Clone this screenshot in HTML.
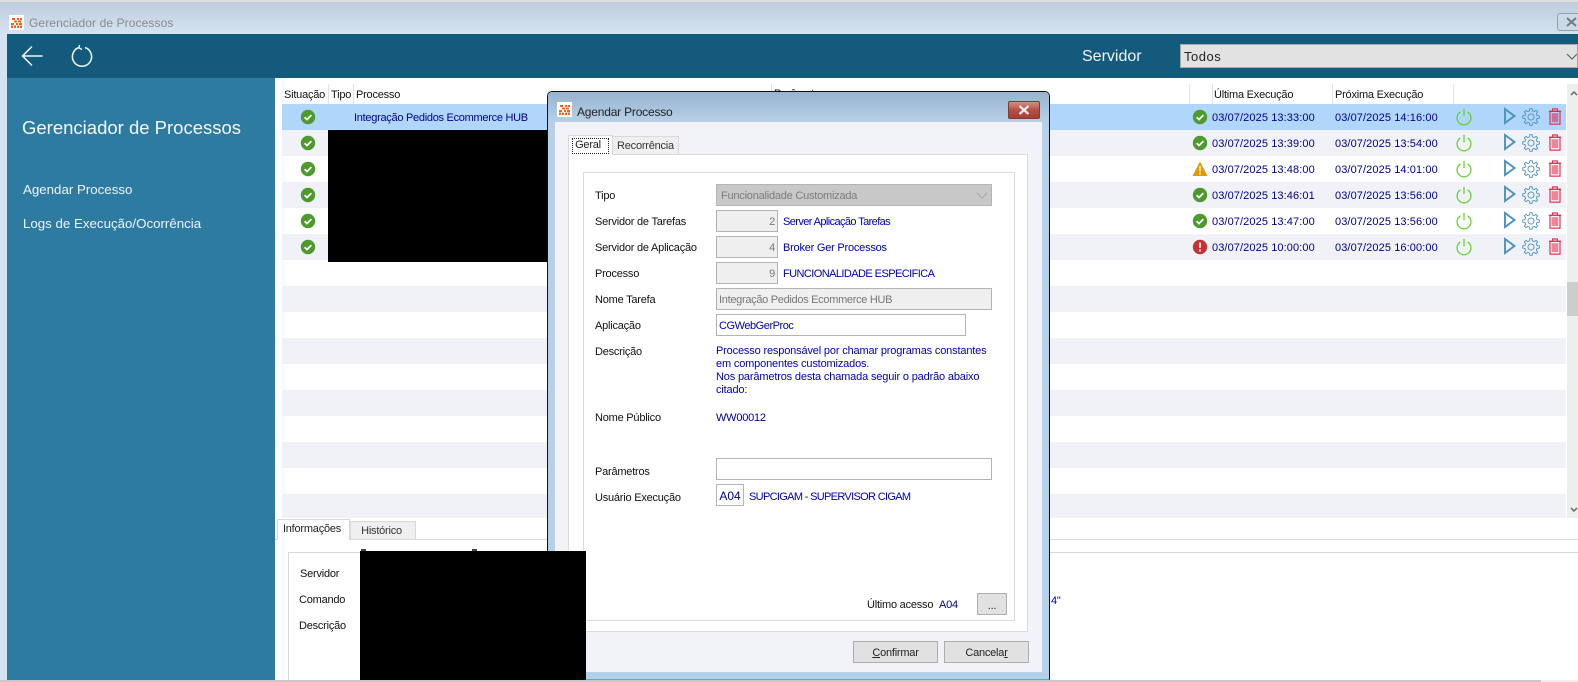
<!DOCTYPE html>
<html lang="pt"><head><meta charset="utf-8"><title>Gerenciador de Processos</title>
<style>
html,body{margin:0;padding:0;background:#fff}
body{width:1578px;height:682px;overflow:hidden;position:relative;font-family:"Liberation Sans",sans-serif;font-size:11px;letter-spacing:-.22px;color:#111}
div,span,svg{position:absolute;box-sizing:border-box}
.t{height:16px;line-height:16px;white-space:nowrap}
.b{color:#0000b4}
.n{color:#00008c}
.st{left:1212px;letter-spacing:.1px}
.nx{left:1335px;letter-spacing:.1px}
.row{left:282px;width:1284px;height:26px}
.g{background:#f0f2f8}
.inp{border:1px solid #b4b4b4;background:#efefef;height:22px;line-height:23px;color:#777;white-space:nowrap}
.lab{left:595px}
.btn{background:#e1e1e1;border:1px solid #adadad;text-align:center;line-height:22px;height:22px;width:85px;top:641px;color:#222}
.tab{background:#efefef;border:1px solid #d9d9d9;text-align:center}
.hl{width:1px;background:#e2e2e2;top:84px;height:20px}
u{text-decoration:underline}
</style></head><body>
<svg width="0" height="0" style="display:none">
<defs>
<symbol id="ok" viewBox="0 0 16 16"><circle cx="8" cy="8" r="7.2" fill="#4f9a2e"/><path d="M4.6 8.2l2.4 2.3 4.4-4.4" fill="none" stroke="#fff" stroke-width="1.7"/></symbol>
<symbol id="pw" viewBox="0 0 20 20"><path d="M6 4.400a7.700 7.700 0 1 0 8 0" fill="none" stroke="#63d02f" stroke-width="1.400"/><path d="M10 1v8" stroke="#63d02f" stroke-width="1.400"/></symbol>
<symbol id="pl" viewBox="0 0 14 18"><path d="M2 2l9.500 7L2 16z" fill="none" stroke="#4b91bd" stroke-width="1.900"/></symbol>
<symbol id="ge" viewBox="-10 -10 20 20"><path d="M-1.570-6.820L-1.290-9.210 1.290-9.210 1.570-6.820 3.710-5.930 5.600-7.420 7.420-5.600 5.930-3.710 6.820-1.570 9.210-1.290 9.210 1.290 6.820 1.570 5.930 3.710 7.420 5.600 5.600 7.420 3.710 5.930 1.570 6.820 1.290 9.210-1.290 9.210-1.570 6.820-3.710 5.930-5.600 7.420-7.420 5.600-5.930 3.710-6.820 1.570-9.210 1.290-9.210-1.290-6.820-1.570-5.930-3.710-7.420-5.600-5.600-7.420-3.710-5.930z" fill="none" stroke="#4b91bd" stroke-width="1"/><circle r="3.400" fill="none" stroke="#4b91bd" stroke-width="1"/></symbol>
<symbol id="tr" viewBox="0 0 14 18"><path d="M0.500 3.500h13M4.500 3.500V1h5v2.500" fill="none" stroke="#e5234d" stroke-width="1.200"/><rect x="1.700" y="3.500" width="10.600" height="13.600" fill="#fff" fill-opacity=".4" stroke="#e5234d" stroke-width="1.200"/><rect x="3.500" y="5.500" width="7" height="9.500" fill="#ee8496"/></symbol>
<symbol id="trs" viewBox="0 0 14 18"><path d="M0.500 3.500h13M4.500 3.500V1h5v2.500" fill="none" stroke="#e5234d" stroke-width="1.200"/><rect x="1.700" y="3.500" width="10.600" height="13.600" fill="none" stroke="#e5234d" stroke-width="1.200"/><rect x="3.500" y="5.500" width="7" height="9.500" fill="#c8709a"/></symbol>
<symbol id="lg" viewBox="0 0 15 15"><rect width="15" height="15" fill="#fff"/><path d="M3 3h3v2H3zM8 3h2v2H8zM11 3h2v2h-2zM5 5.500h3v2H5zM9 5.500h3v2H9zM2 8h3v2H2zM7 8h2v2H7zM10 8h3v2h-3zM2 10.500h2v2.500H2zM5 10.500h2v2.500H5zM8 10.500h2v2.500H8zM11 10.500h2v2.500h-2z" fill="#f0641e"/></symbol>
</defs></svg>

<!-- window chrome -->
<div style="left:0;top:0;width:1578px;height:34px;background:linear-gradient(#bccada 0,#c2d0df 8px,#d4e3f1 100%)"></div>
<div style="left:0;top:0;width:1578px;height:2px;background:#dfdfdf"></div>
<div style="left:0;top:34px;width:7px;height:648px;background:#d4e3f1"></div>
<svg style="left:9px;top:15px" width="15" height="15"><use href="#lg"/></svg>
<div class="t" style="left:29px;top:15px;color:#8a8a8a;font-size:12px;letter-spacing:.1px">Gerenciador de Processos</div>
<div style="left:1557px;top:13px;width:30px;height:18px;border:1px solid #8fa0b5;border-radius:3px;background:#ccd9e6"></div>
<svg style="left:1566px;top:17px" width="12" height="10"><path d="M1 1l9 8M10 1L1 9" stroke="#778" stroke-width="2"/></svg>

<!-- top bar -->
<div style="left:7px;top:34px;width:1571px;height:44px;background:#135a7c"></div>
<svg style="left:21px;top:45px" width="23" height="22"><path d="M1.500 11h20M11 1.500L1.500 11l9.500 9.500" fill="none" stroke="#f2f6f9" stroke-width="1.500"/></svg>
<svg style="left:70px;top:44px" width="24" height="24"><path d="M9 3.500a9.600 9.600 0 1 0 6 0" fill="none" stroke="#f2f6f9" stroke-width="1.500"/><path d="M9.500 1l-.5 3 3 1.500" fill="none" stroke="#f2f6f9" stroke-width="1.300"/></svg>
<div class="t" style="left:1082px;top:49px;color:#f0f4f7;font-size:16px;letter-spacing:0">Servidor</div>
<div style="left:1180px;top:44px;width:398px;height:24px;background:#e2e2e2;border:1px solid #a8a8a8"></div>
<div class="t" style="left:1184px;top:49px;font-size:13px;color:#222;letter-spacing:.5px">Todos</div>
<svg style="left:1566px;top:53px" width="12" height="8"><path d="M1 1l5 5 5-5" fill="none" stroke="#666" stroke-width="1.200"/></svg>

<!-- sidebar -->
<div style="left:7px;top:78px;width:268px;height:604px;background:#2e7ba2"></div>
<div class="t" style="left:22px;top:118px;height:20px;line-height:20px;color:#f2f6f9;font-size:18.500px;letter-spacing:0">Gerenciador de Processos</div>
<div class="t" style="left:23px;top:182px;color:#edf3f7;font-size:13.300px;letter-spacing:0">Agendar Processo</div>
<div class="t" style="left:23px;top:216px;color:#edf3f7;font-size:13.300px;letter-spacing:0">Logs de Execução/Ocorrência</div>

<!-- grid header -->
<div class="t" style="left:284px;top:87px">Situação</div>
<div class="hl" style="left:328px"></div>
<div class="t" style="left:331px;top:87px">Tipo</div>
<div class="hl" style="left:353px"></div>
<div class="t" style="left:356px;top:87px">Processo</div>
<div class="hl" style="left:771px"></div>
<div class="t" style="left:774px;top:86px">Parâmetros</div>
<div class="hl" style="left:1189px"></div>
<div class="hl" style="left:1212px"></div>
<div class="t" style="left:1214px;top:87px">Última Execução</div>
<div class="hl" style="left:1332px"></div>
<div class="t" style="left:1335px;top:87px">Próxima Execução</div>
<div class="hl" style="left:1453px"></div>

<!-- rows -->
<div class="row" style="top:104px;background:#b1d6fb"></div>
<div class="row g" style="top:130px"></div>
<div class="row g" style="top:182px"></div>
<div class="row g" style="top:234px"></div>
<div class="row g" style="top:286px"></div>
<div class="row g" style="top:338px"></div>
<div class="row g" style="top:390px"></div>
<div class="row g" style="top:442px"></div>
<div class="row g" style="top:494px;height:24px"></div>

<svg style="left:300px;top:109px" width="16" height="16"><use href="#ok"/></svg>
<svg style="left:300px;top:135px" width="16" height="16"><use href="#ok"/></svg>
<svg style="left:300px;top:161px" width="16" height="16"><use href="#ok"/></svg>
<svg style="left:300px;top:187px" width="16" height="16"><use href="#ok"/></svg>
<svg style="left:300px;top:213px" width="16" height="16"><use href="#ok"/></svg>
<svg style="left:300px;top:239px" width="16" height="16"><use href="#ok"/></svg>
<div class="t n" style="left:354px;top:110px;letter-spacing:-.28px">Integração Pedidos Ecommerce HUB</div>
<div style="left:328px;top:130px;width:223px;height:132px;background:#000"></div>

<svg style="left:1192px;top:109px" width="16" height="16"><use href="#ok"/></svg>
<svg style="left:1192px;top:135px" width="16" height="16"><use href="#ok"/></svg>
<svg style="left:1192px;top:161px" width="16" height="16"><path d="M8 .5L15.500 15H.5z" fill="#e09a0e"/><path d="M8 5v5.500M8 11.500v2" stroke="#f6dfa4" stroke-width="1.800"/></svg>
<svg style="left:1192px;top:187px" width="16" height="16"><use href="#ok"/></svg>
<svg style="left:1192px;top:213px" width="16" height="16"><use href="#ok"/></svg>
<svg style="left:1192px;top:239px" width="16" height="16"><circle cx="8" cy="8" r="7.200" fill="#c43233"/><path d="M8 3.500v5.500M8 10.500v2" stroke="#fbe6e6" stroke-width="1.800"/></svg>

<div class="t n st" style="top:110px">03/07/2025 13:33:00</div><div class="t n nx" style="top:110px">03/07/2025 14:16:00</div>
<div class="t n st" style="top:136px">03/07/2025 13:39:00</div><div class="t n nx" style="top:136px">03/07/2025 13:54:00</div>
<div class="t n st" style="top:162px">03/07/2025 13:48:00</div><div class="t n nx" style="top:162px">03/07/2025 14:01:00</div>
<div class="t n st" style="top:188px">03/07/2025 13:46:01</div><div class="t n nx" style="top:188px">03/07/2025 13:56:00</div>
<div class="t n st" style="top:214px">03/07/2025 13:47:00</div><div class="t n nx" style="top:214px">03/07/2025 13:56:00</div>
<div class="t n st" style="top:240px">03/07/2025 10:00:00</div><div class="t n nx" style="top:240px">03/07/2025 16:00:00</div>

<svg style="left:1455px;top:108px" width="18" height="18"><use href="#pw"/></svg>
<svg style="left:1455px;top:134px" width="18" height="18"><use href="#pw"/></svg>
<svg style="left:1455px;top:160px" width="18" height="18"><use href="#pw"/></svg>
<svg style="left:1455px;top:186px" width="18" height="18"><use href="#pw"/></svg>
<svg style="left:1455px;top:212px" width="18" height="18"><use href="#pw"/></svg>
<svg style="left:1455px;top:238px" width="18" height="18"><use href="#pw"/></svg>

<svg style="left:1503px;top:107px" width="14" height="18"><use href="#pl"/></svg>
<svg style="left:1503px;top:133px" width="14" height="18"><use href="#pl"/></svg>
<svg style="left:1503px;top:159px" width="14" height="18"><use href="#pl"/></svg>
<svg style="left:1503px;top:185px" width="14" height="18"><use href="#pl"/></svg>
<svg style="left:1503px;top:211px" width="14" height="18"><use href="#pl"/></svg>
<svg style="left:1503px;top:237px" width="14" height="18"><use href="#pl"/></svg>

<svg style="left:1522px;top:108px" width="18" height="18"><use href="#ge"/></svg>
<svg style="left:1522px;top:134px" width="18" height="18"><use href="#ge"/></svg>
<svg style="left:1522px;top:160px" width="18" height="18"><use href="#ge"/></svg>
<svg style="left:1522px;top:186px" width="18" height="18"><use href="#ge"/></svg>
<svg style="left:1522px;top:212px" width="18" height="18"><use href="#ge"/></svg>
<svg style="left:1522px;top:238px" width="18" height="18"><use href="#ge"/></svg>

<svg style="left:1548px;top:108px" width="14" height="17"><use href="#trs"/></svg>
<svg style="left:1548px;top:134px" width="14" height="17"><use href="#tr"/></svg>
<svg style="left:1548px;top:160px" width="14" height="17"><use href="#tr"/></svg>
<svg style="left:1548px;top:186px" width="14" height="17"><use href="#tr"/></svg>
<svg style="left:1548px;top:212px" width="14" height="17"><use href="#tr"/></svg>
<svg style="left:1548px;top:238px" width="14" height="17"><use href="#tr"/></svg>

<!-- scrollbar -->
<div style="left:1567px;top:84px;width:11px;height:434px;background:#eee"></div>
<div style="left:1567px;top:282px;width:11px;height:34px;background:#cdcdcd"></div>
<svg style="left:1570px;top:90px" width="8" height="6"><path d="M1 5l3-3 3 3" fill="none" stroke="#666" stroke-width="1.500"/></svg>
<svg style="left:1570px;top:507px" width="8" height="6"><path d="M1 1l3 3 3-3" fill="none" stroke="#666" stroke-width="1.500"/></svg>

<!-- bottom panel -->
<div style="left:275px;top:539px;width:1303px;height:1px;background:#d8d8d8"></div>
<div style="left:288px;top:552px;width:1290px;height:1px;background:#d8d8d8"></div>
<div style="left:288px;top:552px;width:1px;height:130px;background:#d8d8d8"></div>
<div class="tab t" style="left:350px;top:521px;width:66px;height:19px;line-height:18px;color:#333;padding-right:3px">Histórico</div>
<div class="tab t" style="left:277px;top:519px;width:73px;height:21px;line-height:19px;background:#fff;border-bottom:0;color:#222;padding-right:3px">Informações</div>
<div class="t" style="left:300px;top:566px">Servidor</div>
<div class="t" style="left:299px;top:592px">Comando</div>
<div class="t" style="left:299px;top:618px">Descrição</div>
<div class="t b" style="left:1051px;top:593px">4"</div>

<!-- dialog -->
<div style="left:547px;top:91px;width:503px;height:589px;background:#b7d0e8;border:1px solid #111;border-radius:5px 5px 0 0;border-bottom:1px solid #1ec8e0"></div>
<div style="left:548px;top:92px;width:501px;height:30px;background:linear-gradient(#97b3cd,#b7d0e8);border-radius:4px 4px 0 0"></div>
<svg style="left:557px;top:102px" width="15" height="15"><use href="#lg"/></svg>
<div class="t" style="left:577px;top:104px;color:#222;font-size:12px;letter-spacing:-.2px">Agendar Processo</div>
<div style="left:1008px;top:101px;width:32px;height:18px;background:linear-gradient(#cf9288,#b94f43 50%,#a63e33);border:1px solid #7c3a32;border-radius:2px"></div>
<svg style="left:1018px;top:105px" width="12" height="10"><path d="M1.500 1l9 8M10.500 1l-9 8" stroke="#f2eeee" stroke-width="2.200"/></svg>
<div style="left:555px;top:122px;width:487px;height:550px;background:#f1f3f9"></div>
<div style="left:568px;top:154px;width:460px;height:478px;background:#fff;border:1px solid #dcdcdc"></div>
<div class="tab t" style="left:612px;top:136px;width:67px;height:19px;line-height:18px;color:#333">Recorrência</div>
<div class="tab t" style="left:568px;top:135px;width:45px;height:20px;line-height:16px;background:#fff;border-bottom:0;color:#222"><span style="left:3px;top:2px;width:37px;height:16px;border:1px dotted #222;line-height:13px;padding-right:5px">Geral</span></div>
<div style="left:583px;top:172px;width:432px;height:449px;background:#fff;border:1px solid #dcdcdc"></div>

<div class="t lab" style="top:188px">Tipo</div>
<div class="t lab" style="top:214px">Servidor de Tarefas</div>
<div class="t lab" style="top:240px">Servidor de Aplicação</div>
<div class="t lab" style="top:266px">Processo</div>
<div class="t lab" style="top:292px">Nome Tarefa</div>
<div class="t lab" style="top:318px">Aplicação</div>
<div class="t lab" style="top:344px">Descrição</div>
<div class="t lab" style="top:410px">Nome Público</div>
<div class="t lab" style="top:464px">Parâmetros</div>
<div class="t lab" style="top:490px">Usuário Execução</div>

<div class="inp" style="left:716px;top:184px;width:276px;background:#c8c8c8;padding-left:4px;color:#7c7c7c">Funcionalidade Customizada</div>
<svg style="left:976px;top:192px" width="12" height="8"><path d="M1 1l5 5 5-5" fill="none" stroke="#aaa" stroke-width="1.200"/></svg>
<div class="inp" style="left:716px;top:210px;width:62px;text-align:right;padding-right:2px">2</div>
<div class="inp" style="left:716px;top:236px;width:62px;text-align:right;padding-right:2px">4</div>
<div class="inp" style="left:716px;top:262px;width:62px;text-align:right;padding-right:2px">9</div>
<div class="t b" style="left:783px;top:214px;letter-spacing:-.6px">Server Aplicação Tarefas</div>
<div class="t b" style="left:783px;top:240px">Broker Ger Processos</div>
<div class="t b" style="left:783px;top:266px;letter-spacing:-.57px">FUNCIONALIDADE ESPECIFICA</div>
<div class="inp" style="left:716px;top:288px;width:276px;padding-left:2px;letter-spacing:-.3px">Integração Pedidos Ecommerce HUB</div>
<div class="inp b" style="left:716px;top:314px;width:250px;background:#fff;padding-left:2px;color:#0000b4;letter-spacing:-.45px">CGWebGerProc</div>
<div class="t b" style="left:716px;top:343px;letter-spacing:-.16px">Processo responsável por chamar programas constantes</div>
<div class="t b" style="left:716px;top:356px;letter-spacing:-.16px">em componentes customizados.</div>
<div class="t b" style="left:716px;top:369px;letter-spacing:-.16px">Nos parâmetros desta chamada seguir o padrão abaixo</div>
<div class="t b" style="left:716px;top:382px;letter-spacing:-.16px">citado:</div>
<div class="t n" style="left:716px;top:410px">WW00012</div>
<div class="inp" style="left:716px;top:458px;width:276px;background:#fff"></div>
<div class="inp" style="left:716px;top:484px;width:28px;background:#fff;text-align:center;color:#00008c;font-size:12px;letter-spacing:0">A04</div>
<div class="t b" style="left:749px;top:489px;letter-spacing:-.67px">SUPCIGAM - SUPERVISOR CIGAM</div>
<div class="t" style="left:867px;top:597px">Último acesso</div>
<div class="t n" style="left:939px;top:597px">A04</div>
<div class="btn" style="left:977px;top:593px;width:30px;line-height:24px">...</div>
<div class="btn" style="left:853px"><u>C</u>onfirmar</div>
<div class="btn" style="left:944px">Cancela<u>r</u></div>

<!-- bottom redaction -->
<div style="left:361px;top:549px;width:5px;height:3px;background:#444"></div>
<div style="left:472px;top:549px;width:5px;height:3px;background:#444"></div>
<div style="left:360px;top:551px;width:226px;height:129px;background:#000"></div>
<div style="left:0;top:680px;width:1541px;height:2px;background:#c8c8c8"></div>
<div style="left:1541px;top:680px;width:37px;height:2px;background:#efefef"></div>
</body></html>
